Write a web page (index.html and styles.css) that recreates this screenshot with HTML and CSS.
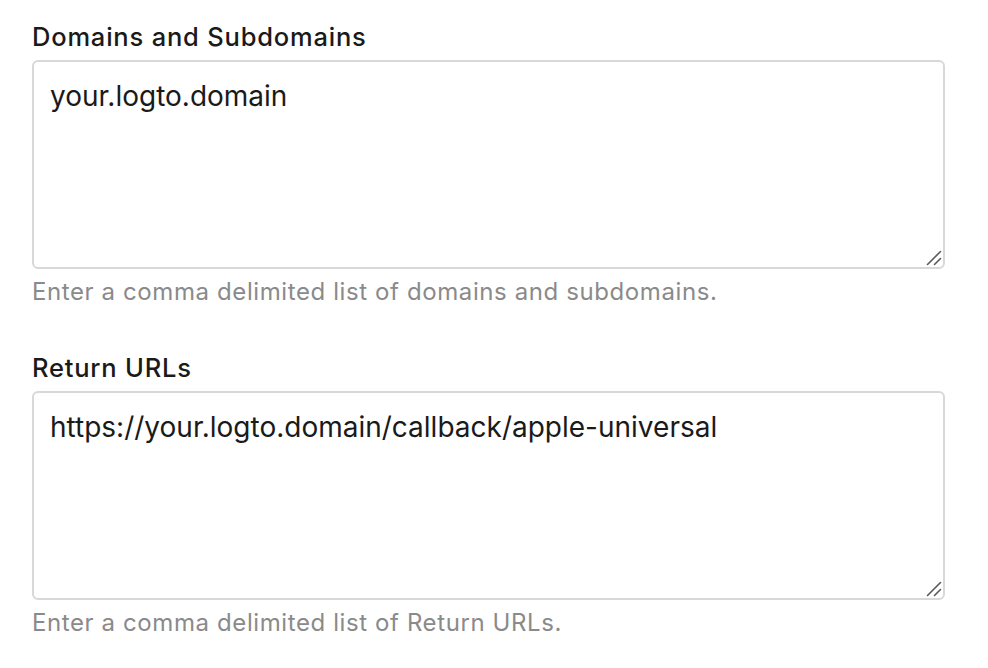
FILE: index.html
```html
<!DOCTYPE html>
<html>
<head>
<meta charset="utf-8">
<link rel="stylesheet" href="styles.css">
</head>
<body>
<div class="form">
  <div class="field">
    <label class="label" for="domains">Domains and Subdomains</label>
    <div class="box">
      <textarea id="domains" class="input">your.logto.domain</textarea>
      <svg class="grip" width="16" height="16" viewBox="0 0 16 16"><path d="M1.5 14.5 L14.5 1.5 M8.5 14.5 L14.5 8.5" stroke="#5a5a5a" stroke-width="1.6" stroke-linecap="round"/></svg>
    </div>
    <div class="help">Enter a comma delimited list of domains and subdomains.</div>
  </div>
  <div class="field">
    <label class="label" for="urls">Return URLs</label>
    <div class="box">
      <textarea id="urls" class="input">https://your.logto.domain/callback/apple-universal</textarea>
      <svg class="grip" width="16" height="16" viewBox="0 0 16 16"><path d="M1.5 14.5 L14.5 1.5 M8.5 14.5 L14.5 8.5" stroke="#5a5a5a" stroke-width="1.6" stroke-linecap="round"/></svg>
    </div>
    <div class="help">Enter a comma delimited list of Return URLs.</div>
  </div>
</div>
</body>
</html>
```
FILE: styles.css
```css
html, body {
  margin: 0;
  padding: 0;
  background: #ffffff;
}
body {
  font-family: Inter, "Noto Sans", sans-serif;
  color: #1a1a1a;
}
.form {
  padding: 22px 43px 0 32px;
  display: flex;
  flex-direction: column;
  gap: 46px;
}
.field {
  display: flex;
  flex-direction: column;
}
.label {
  font-size: 25.5px;
  font-weight: 500;
  letter-spacing: 0.8px;
  line-height: 30px;
  margin-bottom: 8px;
  color: #1a1a1a;
}
.box {
  position: relative;
  display: flex;
}
.input {
  box-sizing: border-box;
  width: 100%;
  height: 209px;
  border: 2px solid #d8d8d8;
  border-radius: 6px;
  padding: 16px 16px;
  font-family: Inter, "Noto Sans", sans-serif;
  font-size: 28px;
  line-height: 36px;
  color: #1a1a1a;
  resize: none;
  outline: none;
  margin: 0;
  background: #fff;
}
.grip {
  position: absolute;
  right: 3px;
  bottom: 3px;
}
.help {
  margin-top: 8px;
  font-size: 24px;
  letter-spacing: 0.6px;
  line-height: 30px;
  color: #8a8a8a;
}
```
